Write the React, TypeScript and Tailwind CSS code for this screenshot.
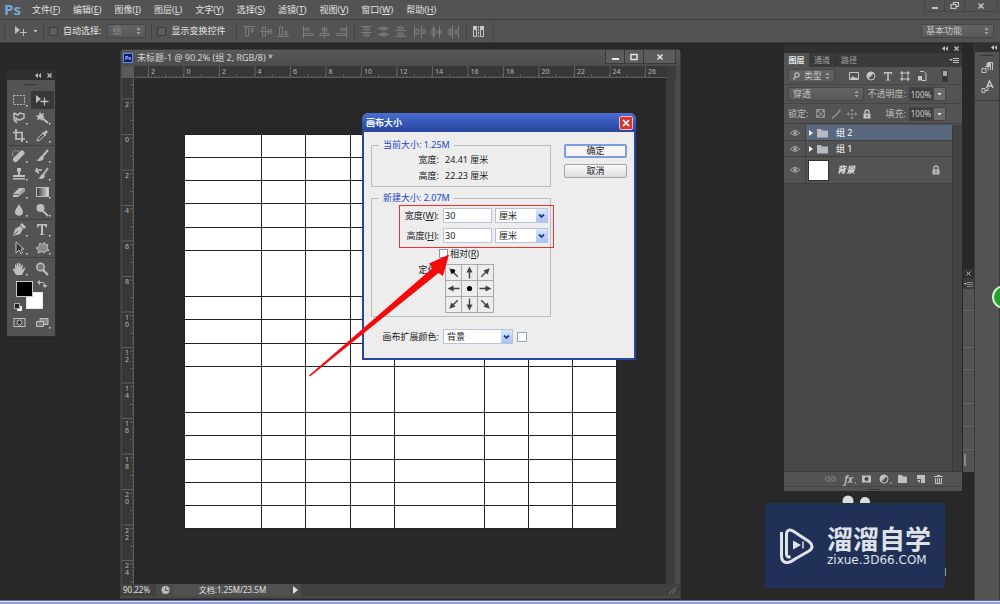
import React, { ReactNode } from "react";

const FONT = "font-['Noto_Sans','Noto_Sans_CJK_SC',sans-serif]";

function Svg({ w = 14, h = 14, children, className = "" }: { w?: number; h?: number; children: ReactNode; className?: string }) {
  return (
    <svg width={w} height={h} viewBox={`0 0 ${w} ${h}`} className={`block shrink-0 ${className}`} fill="none" stroke="currentColor" aria-hidden="true">
      {children}
    </svg>
  );
}

const F = { fill: "currentColor", stroke: "none" } as const;

function UpDown() {
  return (
    <Svg w={5} h={8} className="pointer-events-none text-[#a4a4a4]">
      <path d="M0.5 3 2.5 0.5 4.5 3zM0.5 5 2.5 7.5 4.5 5z" {...F} />
    </Svg>
  );
}

function DarkSelect({ label, value, className, dim = false, icon }: { label: string; value: string; className: string; dim?: boolean; icon?: ReactNode }) {
  return (
    <div className={`flex items-center gap-1 rounded-[1px] border border-[#464646] bg-linear-to-b from-[#636363] to-[#595959] px-1 ${className}`}>
      {icon}
      <select aria-label={label} className={`min-w-0 flex-1 appearance-none bg-transparent text-[9px] leading-3 outline-none ${dim ? "text-[#8c8c8c]" : "text-[#c4c4c4]"}`}>
        <option>{value}</option>
      </select>
      <UpDown />
    </div>
  );
}

function Divider() {
  return <span className="h-4 w-px shrink-0 bg-[#404040]" />;
}

/* ---------- menu and options bars ---------- */

const MENUS: [string, string][] = [
  ["文件", "F"], ["编辑", "E"], ["图像", "I"], ["图层", "L"], ["文字", "Y"],
  ["选择", "S"], ["滤镜", "T"], ["视图", "V"], ["窗口", "W"], ["帮助", "H"],
];

function MenuBar() {
  return (
    <header className="flex h-5 shrink-0 items-center border-b border-[#3e3e3e] bg-[#535353]">
      <span className="w-8 pl-1 font-['Open_Sans',sans-serif] text-[15px] leading-none font-bold text-[#79a6d8]">Ps</span>
      <nav className="flex gap-[13px]">
        {MENUS.map(([name, key]) => (
          <button key={key} type="button" className="text-[9px] leading-3 whitespace-nowrap text-[#e2e2e2]">
            {name}(<span className="underline">{key}</span>)
          </button>
        ))}
      </nav>
      <div className="mr-[2px] ml-auto flex h-3 self-start border border-t-0 border-[#464646] text-[#c4c4c4]">
        <button type="button" aria-label="最小化" className="flex w-5 items-center justify-center border-r border-[#464646]">
          <Svg w={8} h={10}><path d="M1 7h6" strokeWidth="2" /></Svg>
        </button>
        <button type="button" aria-label="还原" className="flex w-5 items-center justify-center border-r border-[#464646]">
          <Svg w={9} h={9}><path d="M3.500 3.500V1.500h5v4h-2M1 3.500h5v4H1z" strokeWidth="1.200" /></Svg>
        </button>
        <button type="button" aria-label="关闭" className="flex w-8 items-center justify-center">
          <Svg w={8} h={8}><path d="m1.500 1.500 5 5m0-5-5 5" strokeWidth="1.500" /></Svg>
        </button>
      </div>
    </header>
  );
}

const ALIGN: ReactNode[][] = [
  [
    <path key="a" d="M1 1.500h12M3.500 3v8h3V3zM9 3.500h2V7H9z" />,
    <path key="b" d="M1 6.500h12M3.500 2v9h3V2zM9 4.500h3v4H9z" />,
    <path key="c" d="M1 11.500h12M3.500 2v8h3V2zM9 6.500h2V10H9z" />,
  ],
  [
    <path key="a" d="M2.500 1v12M4 3.500h4v2H4zM4 8.500h8v2H4z" />,
    <path key="b" d="M6.500 1v12M4 3.500h5v2H4zM2 8.500h9v2H2z" />,
    <path key="c" d="M11.500 1v12M6 3.500h4v2H6zM2 8.500h8v2H2z" />,
  ],
  [
    <path key="a" d="M1 1.500h11M4 3h5v2H4zM1 7.500h11M4 9h5v2H4z" />,
    <path key="b" d="M4 2h5v3H4zM1 3.500h11M4 8h5v3H4zM1 9.500h11" />,
    <path key="c" d="M4 2h5v2H4zM1 5.500h11M4 8h5v2H4zM1 11.500h11" />,
  ],
  [
    <path key="a" d="M1.500 1v12M3 4h3v5H3zM8.500 1v12M10 4.500h2v4h-2z" />,
    <path key="b" d="M2 4h3v6H2zM3.500 1v12M9.500 1v12M8 5.500h3v3H8z" />,
    <path key="c" d="M2 4h2v6H2zM5.500 1v12M8 5h2v4H8zM11.500 1v12" />,
  ],
];

function AlignGroup({ n }: { n: number }) {
  return (
    <div className="flex gap-[3px] text-[#7c7c7c]">
      {ALIGN[n].map((g, i) => (
        <button type="button" key={i} aria-label={`对齐 ${n * 3 + i + 1}`}>
          <Svg h={13}>{g}</Svg>
        </button>
      ))}
    </div>
  );
}

function DarkCheck({ label }: { label: string }) {
  return (
    <label className="flex items-center gap-[5px] text-[9px] leading-3 whitespace-nowrap text-[#e2e2e2]">
      <input type="checkbox" className="size-[9px] appearance-none border border-[#3a3a3a] bg-[#5e5e5e] checked:bg-[#c0c0c0]" />
      {label}
    </label>
  );
}

function OptionsBar() {
  return (
    <div className="flex h-[23px] shrink-0 items-center gap-[5px] border-b border-[#3a3a3a] bg-[#535353] pr-[6px] pl-1">
      <span className="mr-1 h-4 w-px bg-[#454545]" />
      <Svg w={14} h={10} className="text-[#bdbdbd]">
        <path d="M1 0v8l5-4z" {...F} /><path d="M9.500 3v7M6 6.500h7" />
      </Svg>
      <Svg w={5} h={4} className="text-[#c8c8c8]"><path d="M.5 1h4l-2 2.500z" {...F} /></Svg>
      <Divider />
      <DarkCheck label="自动选择:" />
      <DarkSelect label="自动选择" value="组" dim className="ml-px h-[14px] w-[39px]" />
      <Divider />
      <DarkCheck label="显示变换控件" />
      <span className="w-px" />
      <Divider />
      <AlignGroup n={0} />
      <span className="w-px" />
      <AlignGroup n={1} />
      <Divider />
      <AlignGroup n={2} />
      <AlignGroup n={3} />
      <Divider />
      <button type="button" aria-label="自动对齐" className="text-[#c8c8c8]">
        <Svg w={14} h={13}>
          <path d="M1.500 4.500h3v7h-3zM8.500 4.500h3v7h-3z" /><path d="M1 1h4v3H1zM8 1h4v3H8z" {...F} /><path d="M6.500 1v11" strokeDasharray="2 1" />
        </Svg>
      </button>
      <span className="ml-[2px] h-full w-px bg-[#474747]" />
      <DarkSelect label="工作区" value="基本功能" className="ml-auto h-[14px] w-[73px]" />
    </div>
  );
}

/* ---------- tool panel ---------- */

function PanelHeader() {
  return (
    <div className="flex h-[9px] shrink-0 items-center justify-end gap-[6px] bg-[#303030] pr-[3px] text-[#c0c0c0]">
      <Svg w={6} h={5}><path d="M3 0 0 2.500 3 5zM6 0 3.500 2.500 6 5z" {...F} /></Svg>
      <Svg w={5} h={5}><path d="m.5.5 4 4m0-4-4 4" strokeWidth="1.200" /></Svg>
    </div>
  );
}

const TOOLS: [string, ReactNode][][] = [
  [
    ["选框", <path d="M1.500 2.500h11v9h-11z" strokeDasharray="2 1.200" />],
    ["移动", <><path d="M1 2v8l5-4z" {...F} /><path d="M9.500 4.500v8M5.500 8.500h8" strokeWidth="1.300" /></>],
    ["套索", <><path d="M2 2v7l3 3M2 2l4 2 2-2 4 1v4L8 9 5 8.500M4 6v3l3-1" strokeWidth="1.500" /></>],
    ["魔棒", <><path d="m6 6 7 6" strokeWidth="2" /><path d="m5 0 1 3 3-1-1 3 2 1-3 1v3L5 8 2 9l1-3-3-1 4-1z" {...F} /></>],
    ["裁剪", <path d="M4 0v10h9M1 3.500h9V13" strokeWidth="1.700" />],
    ["吸管", <><path d="m2 12 1-3 5-5 2 2-5 5z" /><path d="m7 4 1-1 1 .5L11 1l2 2-2.500 2.500.5 1-1 1z" {...F} /></>],
  ],
  [
    ["修复", <><path d="M3.500 10.500 10 4" strokeWidth="5" strokeLinecap="round" /><circle cx="4" cy="5" r="3.500" strokeDasharray="1.500 1" /></>],
    ["画笔", <><path d="M13 1 7 8" strokeWidth="2" /><path d="M7 7c-3 0-2 4-6 4 3 2 7 1 8-2z" {...F} /></>],
    ["图章", <path d="M5 1h4v3L8 5v3h5v2H1V8h5V5L5 4zM1 11h12v1.500H1z" {...F} />],
    ["历史", <><path d="M13 1 8 8M1 3h6M2 1 1 4l3 2" strokeWidth="1.700" /><path d="M8 7C5 7 6 11 3 11c3 2 6 1 7-2z" {...F} /></>],
    ["橡皮", <><path d="m1 9 6-6h6l-6 6zM1 9v3h5l7-6V3L7 9z" {...F} /><path d="M1 9.500h6l6-6" stroke="#535353" strokeWidth=".8" /></>],
    ["渐变", <><rect x="1.500" y="2.500" width="12" height="9" fill="url(#fade)" /></>],
    ["模糊", <path d="M7 1c1 3 4 5 4 8 0 5-8 5-8 0 0-3 3-5 4-8z" {...F} />],
    ["减淡", <><circle cx="5.500" cy="5" r="4" {...F} /><path d="m8 8 5 5" strokeWidth="1.800" /></>],
  ],
  [
    ["钢笔", <><path d="m1 13 2-7 5-3 3 3-3 5zM8 2l2-2 4 4-2 2z" {...F} /><path d="m2 12 4-4" stroke="#535353" /></>],
    ["文字", <path d="M2 1h10v3.500h-1L10 2.500H8V11l1.500.5V12h-5v-.5L6 11V2.500H4L3 4.500H2z" {...F} />],
    ["路径选择", <path d="M4 1v11l3-3 2 4 1.500-1L9 8h3z" fill="#333" />],
    ["形状", <path d="M5 2l2 1.500L9.500 1.500 10 4l3-.5L12 7l2 2.500-3.500.5-1.500 2-2-1.500L3 12l.5-3L1 7l3-1.500z" fill="#8a8a8a" strokeLinejoin="round" />],
  ],
  [
    ["抓手", <path d="M4 13 1 8c-1-1 1-2 2-.5V3c0-1 1.500-1 1.500 0l.5 3V1.500c0-1 1.500-1 1.500 0V6l.5-4c0-1 1.500-1 1.500 0v4l1-3c.5-1 1.500-.5 1.500.5L10 8l2-2c1-.5 2 0 1 1l-3 6z" {...F} />],
    ["缩放", <><circle cx="5.500" cy="5" r="3.700" fill="#777" strokeWidth="1.500" /><path d="m8 8 5 5" strokeWidth="2.200" /></>],
  ],
];

function ToolPanel() {
  return (
    <aside className="absolute top-7 left-[7px] w-12 bg-[#535353] pb-1 shadow-[0_0_0_1px_#2c2c2c]">
      <svg width="0" height="0" className="absolute">
        <defs>
          <linearGradient id="fade"><stop offset="0" stopColor="#333" /><stop offset="1" stopColor="#ddd" /></linearGradient>
        </defs>
      </svg>
      <PanelHeader />
      <div className="flex h-[11px] justify-center pt-1"><span className="h-px w-3 bg-[#333]" /></div>
      {TOOLS.map((group, g) => (
        <div key={g} className={`mx-px grid grid-cols-2 ${g < TOOLS.length - 1 ? "mb-px border-b border-[#404040]" : "pt-px"}`}>
          {group.map(([name, glyph]) => (
            <button
              type="button"
              key={name}
              aria-label={name}
              className={`flex h-[18px] items-center justify-center text-[#bfbfbf] ${name === "移动" ? "rounded-[2px] bg-[#383838]" : ""}`}
            >
              <Svg w={16} h={14}>
                {glyph}
                {name !== "缩放" && name !== "移动" && <rect x="14" y="12" width="1.500" height="1.500" fill="#ddd" stroke="none" />}
              </Svg>
            </button>
          ))}
        </div>
      ))}
      <Svg w={46} h={36} className="mx-px">
        <rect x="18.500" y="14.500" width="16" height="16" fill="#fff" stroke="#e8e8e8" />
        <rect x="8.500" y="3.500" width="16" height="15" fill="#000" stroke="#c8c8c8" />
        <path d="M31 4.500h3q3 0 3 3" stroke="#bbb" /><path d="m32 2-3 2.500 3 2.500zM34.500 7h5L37 10z" fill="#bbb" stroke="none" />
        <rect x="9" y="28" width="5" height="5" fill="#eee" stroke="none" /><rect x="6.500" y="25.500" width="5" height="5" fill="#222" stroke="#aaa" />
      </Svg>
      <div className="mx-px grid grid-cols-2 text-[#bfbfbf]">
        <button type="button" aria-label="快速蒙版" className="flex h-[18px] items-center justify-center">
          <Svg w={14} h={12}><rect x="1" y="1.500" width="11" height="8" /><circle cx="6.500" cy="5.500" r="2.500" fill="#333" /></Svg>
        </button>
        <button type="button" aria-label="屏幕模式" className="flex h-[18px] items-center justify-center">
          <Svg w={16} h={14}><path d="M5 2.500h8v6H5z" fill="#888" /><path d="M1.500 5.500h7v5h-7z" fill="#777" /><rect x="14" y="11" width="1.500" height="1.500" fill="#ddd" stroke="none" /></Svg>
        </button>
      </div>
    </aside>
  );
}

/* ---------- document window ---------- */

const STEP = 35.5;

function TopRuler() {
  const majors = Array.from({ length: 15 }, (_, i) => i - 1);
  const minors = Array.from({ length: 145 }, (_, i) => 3.3 + i * 3.55);
  return (
    <Svg w={533} h={12} className="bg-[#373737]">
      {minors.map((x, i) => <path key={i} d={`M${x} ${i % 5 === 3 ? 8 : 10}V12`} stroke="#777" strokeWidth=".7" />)}
      {majors.map((n) => (
        <g key={n}>
          <path d={`M${50 + n * STEP} 0V12`} stroke="#6a6a6a" strokeWidth=".8" />
          <text x={52.5 + n * STEP} y="8" fontSize="7" fill="#b8b8b8" stroke="none">{Math.abs(n * 2)}</text>
        </g>
      ))}
      <path d="M0 11.500H533" stroke="#5c5c5c" />
    </Svg>
  );
}

function SideRuler() {
  const majors = Array.from({ length: 14 }, (_, i) => i - 1);
  const minors = Array.from({ length: 143 }, (_, i) => 3.3 + i * 3.55);
  return (
    <Svg w={12} h={508} className="bg-[#373737]">
      {minors.map((y, i) => <path key={i} d={`M${i % 5 === 1 ? 8 : 10} ${y}H12`} stroke="#777" strokeWidth=".7" />)}
      {majors.map((n) => (
        <g key={n}>
          <path d={`M0 ${56.5 + n * STEP}H12`} stroke="#6a6a6a" strokeWidth=".8" />
          {String(Math.abs(n * 2)).split("").map((c, i) => (
            <text key={i} x="3" y={64 + n * STEP + i * 7} fontSize="7" fill="#b8b8b8" stroke="none">{c}</text>
          ))}
        </g>
      ))}
      <path d="M11.500 0V508" stroke="#5c5c5c" />
    </Svg>
  );
}

const COLS = [0, 77, 121, 166, 210, 300, 344, 388, 432];
const ROWS = [0, 23, 46, 69, 93, 116, 162, 185, 209, 232, 278, 301, 325, 348, 371, 394];

function DocumentWindow() {
  return (
    <section className="absolute top-[6px] bottom-px left-[120px] flex w-[561px] flex-col rounded-t border border-[#3b3b3b] bg-[#4a4a4a] pl-px">
      <div className="flex h-4 shrink-0 items-center gap-1 bg-linear-to-b from-[#595959] to-[#4c4c4c] pl-px">
        <span className="flex size-[10px] items-center justify-center border border-[#6d86d6] bg-[#0b1a72] text-[6px] leading-none font-bold text-[#9db4f5]">Ps</span>
        <h1 className="text-[9px] leading-3 whitespace-nowrap text-[#d6d6d6]">未标题-1 @ 90.2% (组 2, RGB/8) *</h1>
        <div className="mr-1 ml-auto flex h-[14px] self-start border border-t-0 border-[#3a3a3a] bg-[#5c5c5c] text-[#e4e4e4]">
          <button type="button" aria-label="最小化窗口" className="flex w-[19px] items-center justify-center border-r border-[#3a3a3a]">
            <Svg w={8} h={8}><path d="M1 6h7" strokeWidth="2" /></Svg>
          </button>
          <button type="button" aria-label="最大化窗口" className="flex w-[19px] items-center justify-center border-r border-[#3a3a3a]">
            <Svg w={8} h={8}><path d="M1 1.500h6v5H1z" strokeWidth="1.500" /></Svg>
          </button>
          <button type="button" aria-label="关闭窗口" className="flex w-[31px] items-center justify-center">
            <Svg w={8} h={8}><path d="m1.500 1.500 5 5m0-5-5 5" strokeWidth="1.500" /></Svg>
          </button>
        </div>
      </div>
      <div className="flex shrink-0">
        <span className="size-3 bg-[#5a5a5a]" />
        <TopRuler />
        <span className="w-[9px] bg-[#3c3c3c]" />
      </div>
      <div className="flex min-h-0 flex-1 overflow-hidden">
        <SideRuler />
        <div className="flex-1 bg-[#282828] pt-14 pl-[50px]">
          <Svg w={433} h={395} className="bg-white">
            {COLS.map((x) => <path key={x} d={`M${x + 0.5} 0V395`} stroke="#222" />)}
            {ROWS.map((y) => <path key={y} d={`M0 ${y + 0.5}H433`} stroke="#222" />)}
          </Svg>
        </div>
        <span className="mr-[5px] w-[9px] bg-[#3c3c3c]" />
      </div>
      <footer className="mb-[2px] flex h-3 shrink-0 items-center bg-[#414141] text-[8px] leading-3 text-[#e0e0e0]">
        <span className="w-[34px] pl-px">90.22%</span>
        <span className="flex w-[18px] justify-center bg-[#4c4c4c]">
          <Svg w={9} h={12}><circle cx="4.500" cy="6" r="4" fill="#bbb" stroke="none" /><path d="M4.500 3.500V6.500h3" stroke="#555" /></Svg>
        </span>
        <span className="w-[117px] bg-[#505050] text-center">文档:1.25M/23.5M</span>
        <button type="button" aria-label="状态菜单" className="flex h-3 w-[10px] items-center justify-center bg-[#4c4c4c]">
          <Svg w={6} h={8}><path d="M0 0v8l5-4z" {...F} /></Svg>
        </button>
        <Svg w={7} h={7} className="mr-1 ml-auto text-[#777]"><path d="m0 7 7-7M3 7l4-4" /></Svg>
      </footer>
    </section>
  );
}

/* ---------- canvas size dialog ---------- */

function LightSelect({ id, value, className }: { id: string; value: string; className: string }) {
  return (
    <div className={`flex h-[15px] items-center border border-[#b9c3d3] bg-white ${className}`}>
      <select id={id} aria-label={id} className="h-full min-w-0 flex-1 appearance-none pl-[3px] text-[9px] leading-3 outline-none">
        <option>{value}</option>
      </select>
      <span className="pointer-events-none flex h-full w-[11px] items-center justify-center bg-linear-to-b from-[#dbe7ff] to-[#a9c3f7] text-[#223f8f]">
        <Svg w={7} h={6}><path d="m1 1.500 2.500 2.500L6 1.500" strokeWidth="1.800" /></Svg>
      </span>
    </div>
  );
}

const ARROW = "M0-6 3 0H.7V6H-.7V0H-3z";

function AnchorCell({ angle, first = false }: { angle: number | null; first?: boolean }) {
  return (
    <button type="button" aria-label={angle === null ? "居中" : `锚点 ${angle}°`} className="flex size-4 items-center justify-center border-r border-b border-[#a9a9a9] text-[#444]">
      <Svg w={15} h={15}>
        {angle === null ? (
          <circle cx="7.500" cy="7.500" r="2.600" fill="#000" stroke="none" />
        ) : (
          <g transform={`translate(7.500 7.500) rotate(${angle})`}><path d={ARROW} {...F} /></g>
        )}
        {first && <circle cx="7" cy="6" r="2" fill="#000" stroke="none" />}
      </Svg>
    </button>
  );
}

function SizeRow({ id, name, hot }: { id: string; name: string; hot: string }) {
  return (
    <>
      <label htmlFor={id} className="text-right whitespace-nowrap">{name}(<span className="underline">{hot}</span>):</label>
      <div className="flex gap-[3px]">
        <input id={id} defaultValue="30" className="h-[15px] w-[49px] border border-[#b9c3d3] bg-white px-px text-[9px] leading-3 outline-none" />
        <LightSelect id={`${name}单位`} value="厘米" className="w-[53px]" />
      </div>
    </>
  );
}

function CanvasSizeDialog() {
  return (
    <section role="dialog" aria-label="画布大小" className="absolute top-[70px] left-[362px] w-[274px] rounded-t-md border-2 border-t-0 border-[#2a459e] bg-[#ededed] text-[9px] text-[#222]">
      <div className="-mx-[2px] flex h-[19px] items-center justify-between rounded-t-md bg-linear-to-b from-[#4a6fd0] via-[#3559b8] to-[#2a459e] pr-[3px] pl-1">
        <h2 className="text-[9px] leading-3 font-bold text-white">画布大小</h2>
        <button type="button" aria-label="关闭对话框" className="flex size-[14px] items-center justify-center rounded-[2px] border border-[#f0b8b0] bg-[#cf3a37] text-white">
          <Svg w={8} h={8}><path d="m1 1 6 6m0-6-6 6" strokeWidth="1.700" /></Svg>
        </button>
      </div>
      <div className="flex gap-[13px] pt-2 pr-[7px] pl-[7px]">
        <div className="w-[180px]">
          <fieldset className="border border-[#bcbcbc] pt-[2px] pb-[2px]">
            <legend className="ml-[7px] px-1 text-[9px] leading-[10px] text-[#1f45c4]">当前大小: 1.25M</legend>
            <dl className="grid grid-cols-[67px_1fr] gap-x-[6px] leading-4">
              <dt className="text-right">宽度:</dt><dd>24.41 厘米</dd>
              <dt className="text-right">高度:</dt><dd>22.23 厘米</dd>
            </dl>
          </fieldset>
          <fieldset className="mt-[6px] border border-[#bcbcbc] pt-[5px] pb-[3px]">
            <legend className="ml-[7px] px-1 text-[9px] leading-[10px] text-[#1f45c4]">新建大小: 2.07M</legend>
            <div className="grid grid-cols-[67px_1fr] gap-x-1 gap-y-[5px] leading-[15px]">
              <SizeRow id="width" name="宽度" hot="W" />
              <SizeRow id="height" name="高度" hot="H" />
              <label className="col-span-2 flex items-center gap-[2px] pl-[67px] leading-[11px]">
                <input type="checkbox" className="size-[9px] appearance-none border border-[#8a97a8] bg-[#f6f6f6]" />
                <span>相对(<span className="underline">R</span>)</span>
              </label>
              <span className="text-right leading-[11px]">定位:</span>
              <div className="ml-[2px] grid w-[49px] grid-cols-[repeat(3,16px)] border-t border-l border-[#a9a9a9]">
                <AnchorCell angle={-45} first />
                <AnchorCell angle={0} />
                <AnchorCell angle={45} />
                <AnchorCell angle={-90} />
                <AnchorCell angle={null} />
                <AnchorCell angle={90} />
                <AnchorCell angle={-135} />
                <AnchorCell angle={180} />
                <AnchorCell angle={135} />
              </div>
            </div>
          </fieldset>
        </div>
        <div className="flex flex-1 flex-col gap-[6px] pt-1">
          <button type="button" className="h-[14px] rounded-[2px] border-2 border-[#7d9be0] bg-[#f4f4f4] text-[9px] leading-[10px]">确定</button>
          <button type="button" className="h-[14px] rounded-[2px] border border-[#a4a4a4] bg-linear-to-b from-[#fafafa] to-[#dedede] text-[9px] leading-3">取消</button>
        </div>
      </div>
      <div className="mt-3 mb-[14px] flex items-center gap-1 pl-[7px]">
        <label htmlFor="画布扩展颜色" className="w-[68px] text-right whitespace-nowrap">画布扩展颜色:</label>
        <LightSelect id="画布扩展颜色" value="背景" className="w-[70px]" />
        <button type="button" aria-label="扩展颜色" className="size-[10px] border border-[#9aa5b4] bg-white" />
      </div>
    </section>
  );
}

/* ---------- layers panel ---------- */

function Folder() {
  return <Svg w={12} h={10}><path d="M0 1h4l1 1.500h6V9.500H0z" {...F} /></Svg>;
}

function Eye() {
  return (
    <span className="flex w-[22px] items-center justify-center self-stretch border-r border-[#404040] text-[#a8a8a8]">
      <Svg w={10} h={8}><path d="M.5 4Q5-1 9.500 4 5 8.500.5 4z" /><circle cx="5" cy="4" r="1.700" {...F} /></Svg>
    </span>
  );
}

function GroupLayer({ name, selected = false }: { name: string; selected?: boolean }) {
  return (
    <li className="flex h-4 items-center border-b border-[#404040] bg-[#535353]">
      <Eye />
      <button type="button" className={`flex flex-1 items-center gap-1 self-stretch pl-[3px] text-[9px] leading-3 text-white ${selected ? "bg-[#59687e]" : ""}`}>
        <Svg w={4} h={8} className="text-[#f0f0f0]"><path d="M0 1v6l4-3z" {...F} /></Svg>
        <span className="mr-[3px] text-[#b5bac0]"><Folder /></span>
        {name}
      </button>
    </li>
  );
}

function Lock({ className = "" }: { className?: string }) {
  return <Svg w={8} h={10} className={className}><path d="M2 4.500V3q0-2 2-2t2 2v1.500" strokeWidth="1.300" /><path d="M.5 4.500h7V9.500h-7z" {...F} /><path d="M4 6v2" stroke="#444" /></Svg>;
}

const FILTERS: [string, ReactNode][] = [
  ["像素图层", <><path d="M.5 1.500h9v7h-9z" /><path d="m1 8 3-3 2 2 1-1 2 2z" {...F} /></>],
  ["调整图层", <><circle cx="5" cy="5" r="4" /><path d="M2 8A4.200 4.200 0 0 1 8 2z" {...F} /></>],
  ["文字图层", <path d="M1 1h8v2.500h-.8L7.500 2.200H5.800V8.500l1.200.4v.6H3v-.6l1.200-.4V2.200H2.500L1.800 3.500H1z" {...F} />],
  ["形状图层", <path d="M2 2h6v6H2zM0 2h3M0 8h3M7 2h3M7 8h3M2 0v3M8 0v3M2 7v3M8 7v3" />],
  ["智能对象", <><path d="M3 .5h4l2 2v7H5" /><path d="M1 5h4v4.500H1z" {...F} /></>],
];

const DROP = <path d="M11 8.500h2l-1 1.500z" {...F} />;

const FOOTER: [string, ReactNode][] = [
  ["链接图层", <path d="M5 3H2.500a2 2 0 0 0 0 4H5M6 3h2.500a2 2 0 0 1 0 4H6M3.500 5h4" stroke="#888" />],
  ["图层样式", DROP],
  ["蒙版", <><path d="M1 1.500h9v7H1z" {...F} /><circle cx="5.500" cy="5" r="2" fill="#444" stroke="none" /></>],
  ["调整", <><circle cx="5" cy="5" r="4" /><path d="M2 8A4.200 4.200 0 0 1 8 2z" {...F} />{DROP}</>],
  ["新建组", <path d="M1 1h4l1 1.500h4V9H1z" {...F} />],
  ["新建图层", <><path d="M2 1h8v8H6V5H2z" {...F} /><path d="M2 6h3v3z" {...F} /></>],
  ["删除", <path d="M1 2.500h9M4 1.500h3M2.500 4v5.500h6V4M4.500 4v5M6.500 4v5" />],
];

function Percent({ id, label }: { id: string; label: string }) {
  return (
    <div className="ml-auto flex items-center">
      <label htmlFor={id} className="mr-[3px] whitespace-nowrap">{label}</label>
      <input id={id} defaultValue="100%" className="h-[14px] w-6 border border-[#444] bg-[#3f3f3f] text-center text-[8px] text-[#cfcfcf] outline-none" />
      <button type="button" aria-label={`${label}滑块`} className="flex h-[14px] w-[13px] items-center justify-center border border-[#464646] bg-[#6a6a6a] text-[#eee]">
        <Svg w={5} h={4}><path d="M.5 1h4l-2 2.500z" {...F} /></Svg>
      </button>
    </div>
  );
}

function LayersPanel() {
  return (
    <aside className="absolute top-px right-[38px] flex h-[447px] w-[178px] flex-col bg-[#535353] text-[9px] leading-3 text-[#bcbcbc]">
      <PanelHeader />
      <div className="flex h-[14px] shrink-0 items-stretch bg-[#3a3a3a]">
        <button type="button" className="w-[25px] bg-[#535353] text-[8px] font-bold text-[#e6e6e6]">图层</button>
        <button type="button" className="w-[27px] border-r border-[#333] text-[8px] text-[#a2a2a2]">通道</button>
        <button type="button" className="w-[26px] text-[8px] text-[#a2a2a2]">路径</button>
        <button type="button" aria-label="面板菜单" className="mr-[3px] ml-auto self-center">
          <Svg w={10} h={7}><path d="M0 2h4L2 4z" {...F} /><path d="M4 1.500h6M4 3.500h6M4 5.500h6" /></Svg>
        </button>
      </div>
      <div className="flex h-[18px] shrink-0 items-center gap-[7px] border-b border-[#464646] pl-1">
        <DarkSelect
          label="筛选类型"
          value="类型"
          className="mr-[7px] h-[14px] w-[47px]"
          icon={<Svg w={7} h={8}><circle cx="4" cy="3" r="2.200" strokeWidth="1.200" /><path d="M2.500 4.500.5 7.500" strokeWidth="1.500" /></Svg>}
        />
        {FILTERS.map(([n, g]) => (
          <button type="button" key={n} aria-label={n} className="text-[#c6c6c6]"><Svg w={10} h={10}>{g}</Svg></button>
        ))}
        <button type="button" aria-label="筛选开关" className="ml-2 h-3 w-[6px] border border-[#3a3a3a] bg-linear-to-b from-[#aaa] from-50% to-[#333] to-50%" />
      </div>
      <div className="flex h-[19px] shrink-0 items-center border-b border-[#464646] pr-4 pl-1">
        <DarkSelect label="混合模式" value="穿透" className="h-[14px] w-[76px]" />
        <Percent id="opacity" label="不透明度:" />
      </div>
      <div className="flex h-5 shrink-0 items-center border-b border-[#404040] pr-4 pl-1">
        <span>锁定:</span>
        <div className="ml-2 flex items-center gap-[6px] text-[#8e8e8e]">
          <button type="button" aria-label="锁定透明像素"><Svg w={9} h={9}><path d="M.5.500h8v8h-8z" /><path d="M1 1h2.500v2.500H1zM6 1h2.500v2.500H6zM3.500 3.500H6V6H3.500zM1 6h2.500v2.500H1zM6 6h2.500v2.500H6z" {...F} /></Svg></button>
          <button type="button" aria-label="锁定图像像素"><Svg w={10} h={10}><path d="M9.500.500 4.500 7M4 6.500 1 9.500" strokeWidth="1.700" /></Svg></button>
          <button type="button" aria-label="锁定位置"><Svg w={10} h={10}><path d="M5 0v10M0 5h10" strokeDasharray="3 1" /><path d="m3 2 2-2 2 2zM3 8l2 2 2-2zM2 3 0 5l2 2zM8 3l2 2-2 2z" {...F} /></Svg></button>
          <button type="button" aria-label="全部锁定" className="text-[#c4c4c4]"><Lock /></button>
        </div>
        <Percent id="fill" label="填充:" />
      </div>
      <div className="flex min-h-0 flex-1 pt-px">
        <ul className="flex-1 bg-[#484848]">
          <GroupLayer name="组 2" selected />
          <GroupLayer name="组 1" />
          <li className="flex h-[27px] items-center border-b border-[#404040] bg-[#535353]">
            <Eye />
            <span className="ml-[2px] size-[21px] border border-[#333] bg-white" />
            <span className="ml-2 font-bold text-[#e6e6e6] italic">背景</span>
            <Lock className="mr-3 ml-auto" />
          </li>
        </ul>
        <span className="w-[10px] border-l border-[#3a3a3a] bg-[#434343]" />
      </div>
      <footer className="flex h-[15px] shrink-0 items-center justify-end gap-[7px] border-t border-[#3a3a3a] pr-[18px] text-[#c0c0c0]">
        {FOOTER.map(([n, g]) => (
          <button type="button" key={n} aria-label={n} className="grid">
            {n === "图层样式" && <span className="col-start-1 row-start-1 text-[10px] leading-[10px] font-semibold italic">fx</span>}
            <Svg w={11} h={10} className="col-start-1 row-start-1 overflow-visible">{g}</Svg>
          </button>
        ))}
      </footer>
      <div className="flex h-[5px] shrink-0 items-center justify-center border-t border-[#444]"><span className="h-px w-3 bg-[#333]" /></div>
    </aside>
  );
}

function RightDock() {
  return (
    <aside className="absolute inset-y-0 right-0 flex w-[26px] flex-col border-x border-[#3a3a3a] bg-[#535353] text-[#c4c4c4]">
      <div className="flex h-[9px] items-center justify-end bg-[#303030] pr-[2px]">
        <Svg w={6} h={5}><path d="M3 0 0 2.500 3 5zM6 0 3.500 2.500 6 5z" {...F} /></Svg>
      </div>
      <span className="mt-[3px] h-px w-3 self-center bg-[#333]" />
      <div className="flex flex-col items-center gap-1 border-b border-[#393939] pt-1 pb-[5px]">
        <button type="button" aria-label="段落">
          <Svg w={13} h={16}><path d="M12 2H8a2.500 2.500 0 0 0 0 5h1v3h1V3h1v7h1z" {...F} /><path d="M1 8.500h4v4H1zM4 6.500h3v4" /></Svg>
        </button>
        <button type="button" aria-label="字符">
          <Svg w={13} h={15}><path d="m5.500 8 3-7 3.500 7M7 6h4" strokeWidth="1.500" /><path d="M1 8.500h3v4H1zM4 10.500h3v-3" /></Svg>
        </button>
      </div>
    </aside>
  );
}

function CollapsedPanel() {
  return (
    <div className="absolute top-[225px] right-[26px] flex h-[204px] w-[11px] flex-col bg-[#535353] text-[#c0c0c0]">
      <div className="flex h-[10px] items-center justify-center bg-[#303030]"><Svg w={5} h={5}><path d="m.5.5 4 4m0-4-4 4" /></Svg></div>
      <div className="flex h-[11px] items-center justify-center bg-[#3a3a3a]"><Svg w={9} h={6}><path d="M0 2h3L1.500 4z" {...F} /><path d="M3 1.500h6M3 3.500h6M3 5.500h6" stroke="#888" /></Svg></div>
      {[22, 37, 22, 34, 23, 23].map((h, i) => (
        <span key={i} className="border-b border-[#666]" style={{ height: h }} />
      ))}
      <span className="mt-1 ml-px h-3 w-[2px] bg-[#888]" />
    </div>
  );
}

function Watermark() {
  return (
    <div className="absolute right-[55px] bottom-3 flex h-[85px] w-[180px] items-center gap-3 bg-[#213057] pl-[14px] text-[#dfe2e8]">
      <Svg w={36} h={38}>
        <path d="M2.500 5v24q0 7 6.500 6.500Q12 35 16 32L30 24q6-4.500 0-9.500L14 4Q7.500 1 7.500 8v19q0 4 4 2.500" strokeWidth="3" strokeLinejoin="round" />
        <path d="M14 13.500v9l8-4.500z" {...F} /><path d="M24 14.500v7" strokeWidth="1.500" />
      </Svg>
      <div className="flex flex-col pb-1">
        <span className="font-['Noto_Sans_CJK_SC',sans-serif] text-[26px] leading-8 font-bold whitespace-nowrap">溜溜自学</span>
        <span className="font-['DejaVu_Sans',sans-serif] text-[12px] leading-3 whitespace-nowrap">zixue.3D66.COM</span>
      </div>
    </div>
  );
}

export default function App() {
  return (
    <div className={`flex h-screen flex-col overflow-hidden bg-[#282828] ${FONT}`}>
      <MenuBar />
      <OptionsBar />
      <main className="relative flex-1 overflow-hidden">
        <ToolPanel />
        <DocumentWindow />
        <LayersPanel />
        <CollapsedPanel />
        <RightDock />
        <CanvasSizeDialog />
        <svg width="155" height="44" viewBox="0 0 155 44" className="pointer-events-none absolute top-[162px] left-[399px]">
          <rect x="0.500" y="0.500" width="154" height="42" fill="none" stroke="#f03030" />
        </svg>
        <svg width="150" height="130" viewBox="0 0 150 130" className="pointer-events-none absolute top-[206px] left-[304px]">
          <path d="M5 126.500 128.500 19 125 14.500 145 5.500 139 27 134.500 24 6 127.500z" fill="#f40a0a" />
        </svg>
        <svg width="32" height="8" viewBox="0 0 32 8" className="absolute right-[128px] bottom-[97px]">
          <circle cx="8" cy="6" r="5.500" fill="#ddd" /><circle cx="25" cy="7" r="5" fill="#ddd" />
        </svg>
        <Watermark />
        <span className="absolute right-[54px] bottom-6 h-2 w-px bg-[#999]" />
        <span className="absolute top-[242px] -right-4 size-6 rounded-full border-2 border-[#d4efd0] bg-[#1fa32a]" />
      </main>
      <div className="h-1 shrink-0 border-t border-b-2 border-t-[#5c68a8] border-b-[#8f9bd4] bg-[#e4e8fa]" />
    </div>
  );
}
